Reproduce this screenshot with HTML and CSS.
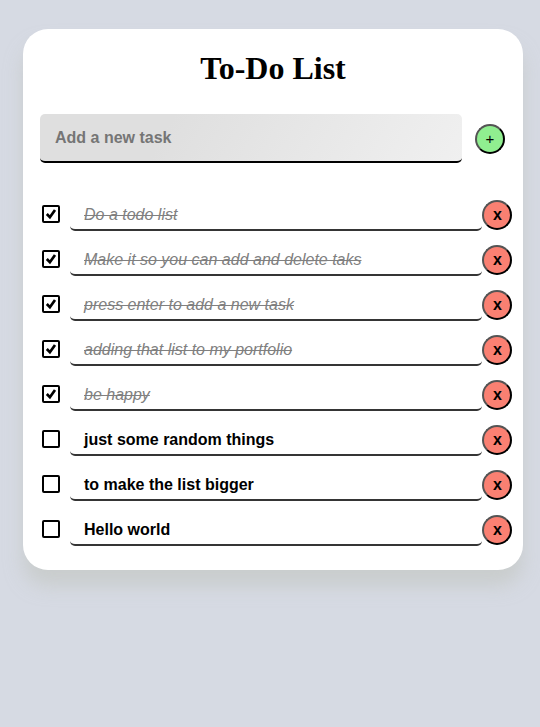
FILE: index.html
```html
<!DOCTYPE html>
<html lang="en">
<head>
<meta charset="utf-8">
<title>To-Do List</title>
<link rel="stylesheet" href="styles.css">
</head>
<body>
<main class="card">
  <h1>To-Do List</h1>
  <div class="new-task">
    <input class="new-input" type="text" placeholder="Add a new task">
    <button class="round add">+</button>
  </div>
  <ul class="tasks"></ul>
</main>
<script src="script.js"></script>
</body>
</html>
```
FILE: styles.css
```css
* { box-sizing: border-box; }
body {
  margin: 0;
  min-height: 727px;
  padding: 29px 17px 0 23px;
  background: #d6dae3;
  font-family: "Liberation Sans", Arial, sans-serif;
}
.card {
  width: 500px;
  height: 541px;
  padding: 21px 11px 0 17px;
  border-radius: 25px;
  background: #fff;
  box-shadow: 0 16px 18px rgba(192, 194, 188, 0.55);
}
h1 {
  margin: 0 6px 27px 0;
  font: bold 32px/37px "Liberation Serif", "Times New Roman", serif;
  text-align: center;
}
.new-task {
  display: flex;
  align-items: center;
  gap: 13px;
}
.new-input {
  width: 422px;
  height: 49px;
  padding: 0 15px;
  border: 0;
  border-bottom: 2px solid #000;
  border-radius: 5px;
  background: linear-gradient(120deg, #dfdfdf 30%, #f0f0f0);
  font: bold 16px "Liberation Sans", Arial, sans-serif;
  outline: none;
}
.new-input::placeholder { color: #757575; }
.round {
  flex: none;
  width: 30px;
  height: 30px;
  padding: 0;
  border: 2px outset #000;
  border-radius: 50%;
  color: #000;
  font: 16px/26px "Liberation Sans", Arial, sans-serif;
}
.add {
  background: lightgreen;
  font-size: 15px;
}
.remove {
  padding-left: 1px;
  background: salmon;
  font-weight: bold;
}
.tasks {
  list-style: none;
  margin: 35px 0 0;
  padding: 0;
}
.task {
  display: flex;
  height: 45px;
  align-items: flex-start;
}
.check {
  flex: none;
  width: 18px;
  height: 18px;
  margin: 7px 10px 0 2px;
}
.text {
  width: 412px;
  height: 33px;
  padding: 0 14px;
  border-bottom: 2px solid #353535;
  border-radius: 5px;
  font-size: 16px;
  font-weight: bold;
  line-height: 33px;
}
.task .round { margin-top: 2px; }
.done .text {
  color: gray;
  font-style: italic;
  font-weight: normal;
  text-decoration: line-through;
}
```
FILE: script.js
```js
const tasks = [
  ["Do a todo list", true],
  ["Make it so you can add and delete taks", true],
  ["press enter to add a new task", true],
  ["adding that list to my portfolio", true],
  ["be happy", true],
  ["just some random things", false],
  ["to make the list bigger", false],
  ["Hello world", false],
];

document.querySelector(".tasks").innerHTML = tasks.map(([text, done]) => `
  <li class="task ${done ? "done" : ""}">
    <svg class="check" viewBox="0 0 18 18" fill="none" stroke="#000" stroke-width="2">
      <rect x="1" y="1" width="16" height="16" rx="1"/>
      ${done ? '<path d="M4.8 9 L7.9 12.2 L13 5" stroke-width="2.7"/>' : ""}
    </svg>
    <span class="text">${text}</span>
    <button class="round remove">x</button>
  </li>`).join("");
```
